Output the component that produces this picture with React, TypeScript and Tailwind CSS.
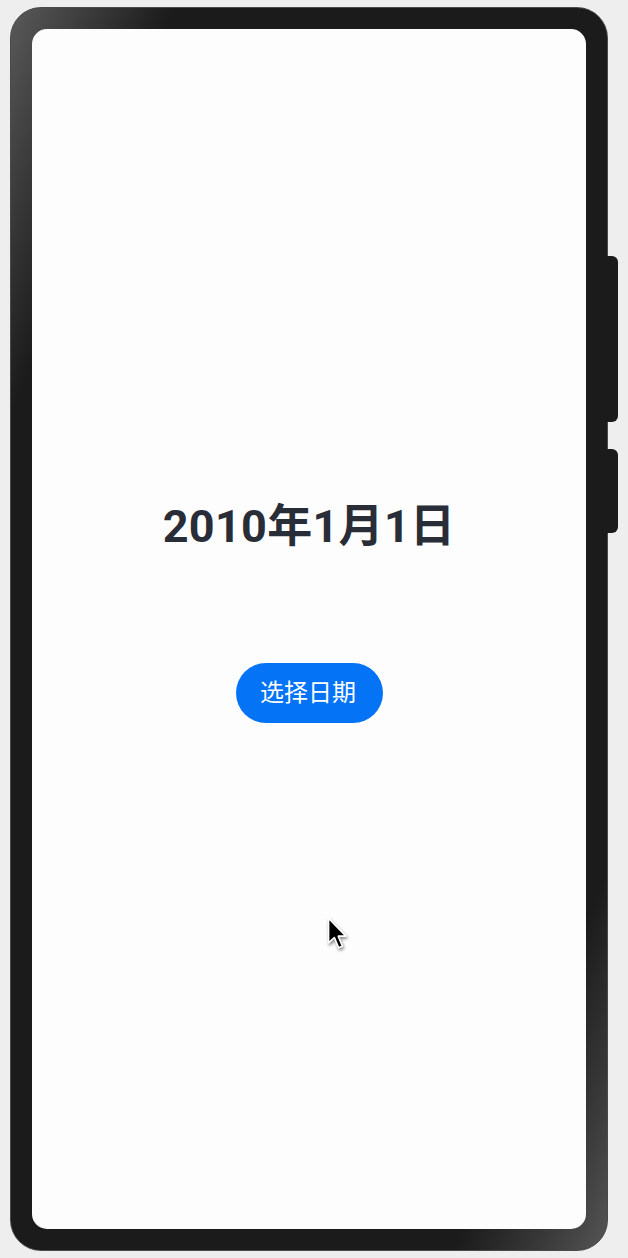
const Cursor = () => (
  <svg
    width="22"
    height="34"
    viewBox="0 0 17 27"
    className="absolute left-[295px] top-[888px] drop-shadow-[1px_2px_1.5px_rgba(0,0,0,0.45)]"
  >
    <path
      d="M1 1 L1 20.5 L5.6 16.3 L9 24.5 L12 23.2 L8.7 15.2 L14.8 15.2 Z"
      fill="#000"
      stroke="#fff"
      strokeWidth="1.3"
      strokeLinejoin="round"
    />
  </svg>
);

export default function App() {
  return (
    <div className="flex min-h-[1258px] w-[628px] items-start bg-[#eeeeee] pt-[7px] pl-[10px]">
      <div className="h-[1244px] w-[598px] shrink-0 rounded-[31px] border border-[#4a4a4a] bg-[linear-gradient(112deg,#5a5a5a_0%,#3c3c3c_7%,#1b1b1b_15%,#1b1b1b_86%,#3a3a3a_94%,#555555_100%)] p-[21px]">
        <div className="relative h-full w-full overflow-hidden rounded-[15px] bg-[#fdfdfd]">
          <div className="flex flex-col items-center pt-[471px]">
            <h1 className="text-[45px] leading-[54px] font-bold tracking-[0.3px] text-[#282d38] font-['Roboto','Noto_Sans_CJK_SC',sans-serif]">
              2010年1月1日
            </h1>
            <button className="mt-[109px] h-[60px] w-[147px] rounded-full bg-[#0573f6] pr-[2px] text-[24px] text-white font-['Roboto','Noto_Sans_CJK_SC',sans-serif]">
              选择日期
            </button>
          </div>
          <Cursor />
        </div>
      </div>

      {/* side keys */}
      <div className="-ml-[1px] flex flex-col gap-[27px] pt-[249px]">
        <div className="h-[166px] w-[11px] rounded-r-[6px] bg-[#1b1b1b]" />
        <div className="h-[84px] w-[11px] rounded-r-[6px] bg-[#1b1b1b]" />
      </div>
    </div>
  );
}
